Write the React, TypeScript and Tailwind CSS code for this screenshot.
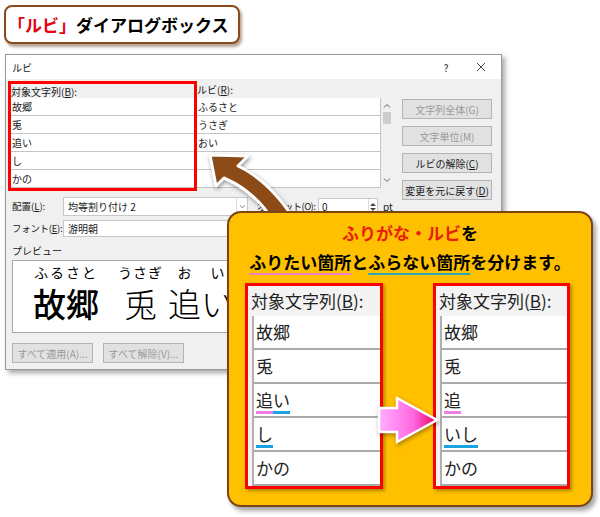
import React from 'react';

const jp = "font-['Noto_Sans_CJK_JP',sans-serif]";

const Chevron = ({ up, className }: { up?: boolean; className?: string }) => (
  <svg viewBox="0 0 8 5" className={className} fill="none" stroke="#606060" strokeWidth={1}>
    <path d={up ? 'M1 4.5 L4 1.5 L7 4.5' : 'M1 0.5 L4 3.5 L7 0.5'} />
  </svg>
);

const DlgButton = ({ text, mn, disabled, w = 'w-[90px]' }: { text: string; mn: string; disabled?: boolean; w?: string }) => (
  <div
    className={`flex h-[20px] ${w} items-center justify-center whitespace-nowrap border border-[#b4b4b4] bg-[#e1e1e1] text-[10px] ${
      disabled ? 'text-[#9a9a9a]' : 'text-[#1a1a1a]'
    }`}
  >
    {text}(<span className={disabled ? '' : 'underline'}>{mn}</span>){mn === 'A' || mn === 'V' ? '...' : ''}
  </div>
);

type Seg = { t: string; c?: 'pink' | 'blue' };

const Panel = ({ rows, w }: { rows: Seg[][]; w: string }) => (
  <div className={`${w} h-[206px] overflow-hidden border-[3px] border-[#ff0000] bg-[#f3f3f3] shadow-[2px_2px_3px_rgba(0,0,0,0.3)]`}>
    <div className="flex h-[30px] items-center whitespace-nowrap pl-[3px] text-[17px] text-[#222]">
      対象文字列(<span className="underline">B</span>):
    </div>
    <div className="ml-[4px] border-l-2 border-[#b0b0b0]">
      {rows.map((segs, i) => (
        <div key={i} className="flex h-[34px] items-center border-b-2 border-[#a9a9a9] bg-white pl-[2px] text-[17px] text-[#222]">
          {segs.map((s, j) => (
            <span
              key={j}
              className={
                s.c === 'pink'
                  ? 'underline decoration-[#f07ee6] decoration-[length:3px] underline-offset-[4px]'
                  : s.c === 'blue'
                  ? 'underline decoration-[#1ba3e0] decoration-[length:3px] underline-offset-[4px]'
                  : ''
              }
            >
              {s.t}
            </span>
          ))}
        </div>
      ))}
    </div>
  </div>
);

export default function App() {
  const listRows = ['故郷', '兎', '追い', 'し', 'かの'];
  const rubyRows = ['ふるさと', 'うさぎ', 'おい', '', ''];

  const leftRows: Seg[][] = [
    [{ t: '故郷' }],
    [{ t: '兎' }],
    [{ t: '追', c: 'pink' }, { t: 'い', c: 'blue' }],
    [{ t: 'し', c: 'blue' }],
    [{ t: 'かの' }],
  ];
  const rightRows: Seg[][] = [
    [{ t: '故郷' }],
    [{ t: '兎' }],
    [{ t: '追', c: 'pink' }],
    [{ t: 'いし', c: 'blue' }],
    [{ t: 'かの' }],
  ];

  return (
    <div className={`relative h-[517px] w-[600px] overflow-hidden bg-white ${jp}`}>
      {/* title badge */}
      <div className="ml-[4px] pt-[5px]">
        <div className="flex h-[39px] w-[236px] items-center rounded-[8px] border-2 border-[#8b4a1c] bg-white pl-[2px] shadow-[2px_3px_3px_rgba(90,50,10,0.45)]">
          <span className="text-[17px] font-bold text-[#e60012]">「ルビ」</span>
          <span className="text-[17px] font-bold text-black">ダイアログボックス</span>
        </div>
      </div>

      {/* dialog */}
      <div className="ml-[5px] mt-[10px] w-[497px] border border-[#9a9a9a] bg-[#f0f0f0] text-[10px] text-[#1a1a1a] shadow-[3px_3px_5px_rgba(0,0,0,0.35)]">
        <div className="flex h-[24px] items-center bg-white pl-[6px]">
          <span>ルビ</span>
          <span className="ml-auto w-[12px] text-center">?</span>
          <svg viewBox="0 0 10 10" className="ml-[24px] mr-[15px] h-[10px] w-[10px]" stroke="#333" strokeWidth={0.9}>
            <path d="M1 1 L9 9 M9 1 L1 9" />
          </svg>
        </div>

        <div className="pb-[6px] pl-[2px] pt-[2px]">
          {/* list section */}
          <div className="flex h-[110px] items-start">
            <div className="h-[110px] w-[189px] border-[3px] border-[#ff0000]">
              <div className="flex h-[14px] items-center whitespace-nowrap">
                対象文字列(<span className="underline">B</span>):
              </div>
              {listRows.map((r) => (
                <div key={r} className="flex h-[18px] items-center border-b border-[#c4c4c4] bg-white pl-[1px]">
                  {r}
                </div>
              ))}
            </div>
            <div className="w-[184px]">
              <div className="flex h-[17px] items-center whitespace-nowrap">
                ルビ(<span className="underline">R</span>):
              </div>
              {rubyRows.map((r, i) => (
                <div key={i} className="flex h-[18px] items-center border-b border-r border-[#c4c4c4] bg-white pl-[1px]">
                  {r}
                </div>
              ))}
            </div>
            <div className="mt-[17px] flex h-[90px] w-[11px] flex-col items-center">
              <Chevron up className="mt-[5px] h-[5px] w-[8px]" />
              <div className="mt-[4px] h-[12px] w-[8px] bg-[#cdcdcd]" />
              <div className="flex-1" />
              <Chevron className="mb-[5px] h-[5px] w-[8px]" />
            </div>
            <div className="ml-[10px] flex flex-col gap-[7px] pt-[18px]">
              <DlgButton text="文字列全体" mn="G" disabled />
              <DlgButton text="文字単位" mn="M" disabled />
              <DlgButton text="ルビの解除" mn="C" />
              <DlgButton text="変更を元に戻す" mn="D" />
            </div>
          </div>

          {/* alignment / offset */}
          <div className="mt-[6px] flex h-[19px] items-center whitespace-nowrap pl-[4px]">
            <span className="w-[51px] text-[9.5px]">
              配置(<span className="underline">L</span>):
            </span>
            <div className="flex h-[19px] w-[185px] items-center border border-[#c8c8c8] bg-white pl-[4px]">
              <span className="flex-1">均等割り付け 2</span>
              <div className="flex h-full w-[11px] items-center justify-center border-l border-[#dcdcdc]">
                <Chevron className="h-[4px] w-[7px]" />
              </div>
            </div>
            <span className="ml-[9px] w-[61px] text-[9.5px] tracking-[-0.6px]">
              オフセット(<span className="underline">O</span>):
            </span>
            <div className="flex h-[18px] w-[60px] border border-[#c8c8c8] bg-white">
              <span className="flex-1 pl-[3px] leading-[16px]">0</span>
              <div className="flex w-[9px] flex-col items-center justify-center gap-[2px] border-l border-[#dcdcdc]">
                <svg viewBox="0 0 6 3" className="h-[3px] w-[6px]" fill="#444">
                  <path d="M0 3 L3 0 L6 3 Z" />
                </svg>
                <svg viewBox="0 0 6 3" className="h-[3px] w-[6px]" fill="#444">
                  <path d="M0 0 L3 3 L6 0 Z" />
                </svg>
              </div>
            </div>
            <span className="ml-[5px]">pt</span>
          </div>

          {/* font */}
          <div className="mt-[4px] flex h-[17px] items-center whitespace-nowrap pl-[4px]">
            <span className="w-[51px] text-[9.5px] tracking-[-0.3px]">
              フォント(<span className="underline">E</span>):
            </span>
            <div className="flex h-[17px] w-[330px] items-center border border-[#c8c8c8] bg-white pl-[4px]">游明朝</div>
          </div>

          <div className="mt-[7px] pl-[4px] leading-[14px]">プレビュー</div>

          {/* preview */}
          <div className="ml-[4px] mt-[2px] flex h-[73px] w-[480px] items-start overflow-hidden border border-[#a8a8a8] bg-white pl-[20px] pt-[2px] text-black">
            <div className="flex flex-col items-center">
              <span className="text-[14px] leading-[18px] tracking-[2px]">ふるさと</span>
              <span className="text-[33px] font-medium leading-[44px]">故郷</span>
            </div>
            <div className="ml-[19px] flex w-[45px] flex-col items-center">
              <span className="text-[14px] leading-[18px] tracking-[1px]">うさぎ</span>
              <span className="text-[33px] font-light leading-[44px]">兎</span>
            </div>
            <div className="ml-[5px] flex flex-col items-center">
              <span className="text-[14px] leading-[18px]">お</span>
              <span className="text-[33px] font-light leading-[44px]">追</span>
            </div>
            <div className="flex flex-col items-center">
              <span className="text-[14px] leading-[18px]">い</span>
              <span className="text-[33px] font-light leading-[44px]">い</span>
            </div>
          </div>

          <div className="ml-[4px] mt-[10px] flex gap-[10px]">
            <DlgButton text="すべて適用" mn="A" disabled w="w-[81px]" />
            <DlgButton text="すべて解除" mn="V" disabled w="w-[81px]" />
          </div>
        </div>
      </div>

      {/* brown curved arrow */}
      <svg
        className="pointer-events-none absolute left-0 top-0 h-[517px] w-[600px] drop-shadow-[1px_2px_2px_rgba(0,0,0,0.4)]"
        viewBox="0 0 600 517"
      >
        <path
          d="M210 155 L248 156 L238 166 Q268 180 292 216 L270 216 Q252 190 224 178 L216 186 Z"
          fill="#8b4a16"
          stroke="#fff"
          strokeWidth={3}
          strokeLinejoin="round"
        />
      </svg>

      {/* callout */}
      <div className="absolute left-[227px] top-[211px] h-[296px] w-[366px] rounded-[14px] border-2 border-[#7a4416] bg-[#ffc000] shadow-[3px_4px_4px_rgba(0,0,0,0.35)]">
        <div className="pt-[5px] text-center text-[17px] font-bold leading-[29px] text-black">
          <div>
            <span className="text-[#e8200c]">ふりがな・ルビ</span>を
          </div>
          <div>
            <span className="underline decoration-[#f07ec8] decoration-[length:2px] underline-offset-[4px]">ふりたい箇所</span>と
            <span className="underline decoration-[#2aa8b0] decoration-[length:2px] underline-offset-[4px]">ふらない箇所</span>を分けます。
          </div>
        </div>
        <div className="mt-[7px] flex gap-[50px] pl-[16px]">
          <Panel rows={leftRows} w="w-[138px]" />
          <Panel rows={rightRows} w="w-[137px]" />
        </div>

        {/* pink arrow */}
        <svg
          className="absolute left-[146px] top-[181px] h-[54px] w-[68px] drop-shadow-[1px_2px_2px_rgba(0,0,0,0.35)]"
          viewBox="0 0 68 54"
        >
          <defs>
            <linearGradient id="pk" x1="0" y1="0" x2="1" y2="0">
              <stop offset="0" stopColor="#ffb0ff" />
              <stop offset="0.6" stopColor="#ff66e0" />
              <stop offset="1" stopColor="#e8005a" />
            </linearGradient>
          </defs>
          <path
            d="M4 14 L22 14 L22 4 L62 26 L22 48 L22 38 L4 38 Z"
            fill="url(#pk)"
            stroke="#fff"
            strokeWidth={2.5}
            strokeLinejoin="miter"
          />
        </svg>
      </div>
    </div>
  );
}
